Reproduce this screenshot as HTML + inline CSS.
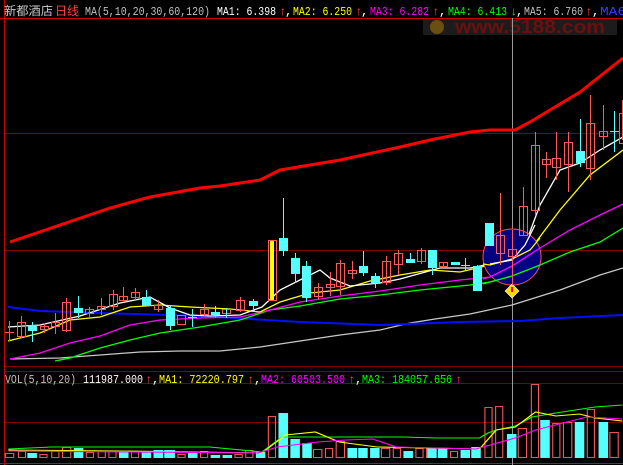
<!DOCTYPE html>
<html><head><meta charset="utf-8"><style>
html,body{margin:0;padding:0;background:#000;width:623px;height:465px;overflow:hidden}
svg{display:block}
text{font-family:"Liberation Mono","WenQuanYi Zen Hei",monospace;font-size:12px}
</style></head><body>
<svg width="623" height="465" viewBox="0 0 623 465" xmlns="http://www.w3.org/2000/svg">
<g stroke="#800000" stroke-width="1">
<line x1="4" y1="133.5" x2="623" y2="133.5"/>
<line x1="4" y1="250.5" x2="623" y2="250.5"/>
<line x1="4" y1="366.5" x2="623" y2="366.5"/>
<line x1="4" y1="371.5" x2="623" y2="371.5"/>
<line x1="4" y1="383.5" x2="623" y2="383.5"/>
<line x1="4" y1="422.5" x2="623" y2="422.5"/>
</g>
<g stroke="#d00000" stroke-width="1">
<line x1="4.5" y1="0" x2="4.5" y2="465"/>
<line x1="0" y1="18.5" x2="623" y2="18.5"/>
<line x1="0" y1="463.5" x2="623" y2="463.5"/>
</g>
<rect x="423" y="19" width="194" height="16" fill="#1c1c1c"/>
<circle cx="437" cy="27" r="7" fill="#6a5010"/>
<text x="455" y="33" fill="#6a1010" font-weight="bold" style="font-family:'Liberation Sans',sans-serif;font-size:18px" textLength="150" lengthAdjust="spacingAndGlyphs">www.5188.com</text>
<line x1="512.5" y1="18" x2="512.5" y2="465" stroke="#9a9a9a"/>
<text x="4" y="15" fill="#c8c8c8" textLength="49" lengthAdjust="spacingAndGlyphs">新都酒店</text>
<text x="55" y="15" fill="#ff4040" textLength="24" lengthAdjust="spacingAndGlyphs">日线</text>
<text x="85" y="15" fill="#c0c0c0" textLength="125" lengthAdjust="spacingAndGlyphs">MA(5,10,20,30,60,120)</text>
<text x="217" y="15" fill="#fff" textLength="59" lengthAdjust="spacingAndGlyphs">MA1: 6.398</text>
<text x="279" y="15" fill="#ff4040">↑</text><text x="285" y="15" fill="#fff">,</text>
<text x="293" y="15" fill="#ffff00" textLength="59" lengthAdjust="spacingAndGlyphs">MA2: 6.250</text>
<text x="355" y="15" fill="#ff4040">↑</text><text x="361" y="15" fill="#fff">,</text>
<text x="370" y="15" fill="#ff00ff" textLength="59" lengthAdjust="spacingAndGlyphs">MA3: 6.282</text>
<text x="432" y="15" fill="#ff4040">↑</text><text x="439" y="15" fill="#fff">,</text>
<text x="448" y="15" fill="#00ff00" textLength="59" lengthAdjust="spacingAndGlyphs">MA4: 6.413</text>
<text x="510" y="15" fill="#00ff00">↓</text><text x="516" y="15" fill="#fff">,</text>
<text x="524" y="15" fill="#c0c0c0" textLength="59" lengthAdjust="spacingAndGlyphs">MA5: 6.760</text>
<text x="585" y="15" fill="#ff4040">↑</text><text x="592" y="15" fill="#fff">,</text>
<text x="600" y="15" fill="#3040ff" textLength="26" lengthAdjust="spacingAndGlyphs">MA6</text>
<polyline fill="none" stroke="#ff0000" stroke-width="3" points="10,242 60,225 110,208 150,197 200,188 220,186 260,180 280,170 340,160 400,147 430,140 470,132 490,130 515,130 530,122 580,92 623,58"/>
<g fill="none" stroke-width="1.3">
<polyline stroke="#c8c8c8" points="10,359 60,358 100,355 140,352 180,351 220,351 260,347 300,341 340,335 380,330 410,323 435,319 470,314 512,305 560,290 600,275 623,268"/>
<polyline stroke="#0010ff" stroke-width="2" points="8,307 40,311 100,313 200,316 300,322 380,325 460,322 520,321 560,318 623,315"/>
<polyline stroke="#00ff00" points="55,361 70,358 100,348 130,340 160,333 200,327 240,320 270,310 300,306 340,299 380,295 420,290 470,285 490,282 512,276 540,265 570,252 600,242 623,228"/>
<polyline stroke="#ff00ff" points="10,359 40,353 70,343 100,336 130,325 160,320 200,318 240,317 270,310 300,302 340,296 380,291 420,285 460,280 490,277 512,266 540,248 570,230 600,215 623,204"/>
<polyline stroke="#ffff00" points="8,341 40,333 70,320 100,317 130,307 160,305 190,307 230,309 260,312 280,302 310,293 340,290 370,281 400,275 430,270 460,272 490,265 512,259 530,250 560,210 590,175 623,150"/>
<polyline stroke="#ffffff" points="8,327 40,325 80,316 120,303 150,297 170,308 190,315 210,316 240,315 262,307 280,290 300,280 320,270 330,278 350,286 380,283 400,279 440,268 470,268 490,264 512,260 525,245 540,205 560,170 580,163 600,150 623,137"/>
</g>
<ellipse cx="512" cy="257" rx="29" ry="28" fill="#000080" stroke="#ff5050" stroke-width="1"/>
<g fill="none" stroke-width="1.3">
<polyline stroke="#ffff00" points="483,264 490,265 512,259 530,250 540,238"/>
<polyline stroke="#ff00ff" points="483,279 490,277 512,266 540,248"/>
<polyline stroke="#00ff00" points="483,284 490,282 512,276 540,265"/>
<polyline stroke="#ffffff" points="490,264 512,260 525,245 535,225"/>
</g>
<polygon points="512,284 519,291 512,298 505,291" fill="#ffd700" stroke="#fff" stroke-width="0.6"/>
<rect x="511" y="287" width="2" height="5" fill="#d00"/>
<g stroke-width="1">
<g stroke="#ff5a5a" fill="none">
<line x1="9.5" y1="321" x2="9.5" y2="341"/><line x1="5" y1="332.5" x2="14" y2="332.5"/>
<line x1="21.5" y1="316" x2="21.5" y2="338"/><rect x="17.5" y="322.5" width="8" height="14"/>
<line x1="44.5" y1="323" x2="44.5" y2="333"/><rect x="40.5" y="326.5" width="8" height="3"/>
<line x1="55.5" y1="313" x2="55.5" y2="334"/><rect x="51.5" y="322.5" width="8" height="4"/>
<line x1="66.5" y1="298" x2="66.5" y2="332"/><rect x="62.5" y="302.5" width="8" height="28"/>
<rect x="85.5" y="309.5" width="8" height="4"/><line x1="89.5" y1="307" x2="89.5" y2="318"/>
<line x1="101.5" y1="298" x2="101.5" y2="315"/><rect x="97.5" y="306.5" width="8" height="3"/>
<line x1="113.5" y1="290" x2="113.5" y2="310"/><rect x="109.5" y="294.5" width="8" height="12"/>
<line x1="123.5" y1="287" x2="123.5" y2="300"/><rect x="119.5" y="296.5" width="8" height="4"/>
<line x1="135.5" y1="288" x2="135.5" y2="300"/><rect x="131.5" y="292.5" width="8" height="5"/>
<line x1="158.5" y1="300" x2="158.5" y2="312"/><rect x="154.5" y="305.5" width="8" height="4"/>
<rect x="177.5" y="315.5" width="8" height="9"/>
<rect x="200.5" y="309.5" width="8" height="5"/><line x1="204.5" y1="304" x2="204.5" y2="316"/>
<rect x="222.5" y="309.5" width="8" height="4"/>
<line x1="240.5" y1="297" x2="240.5" y2="312"/><rect x="236.5" y="300.5" width="8" height="10"/>
<rect x="268.5" y="240.5" width="8" height="60"/>
<line x1="318.5" y1="283" x2="318.5" y2="300"/><rect x="314.5" y="287.5" width="8" height="9"/>
<line x1="330.5" y1="272" x2="330.5" y2="296"/><rect x="326.5" y="284.5" width="8" height="3"/>
<line x1="340.5" y1="260" x2="340.5" y2="295"/><rect x="336.5" y="263.5" width="8" height="23"/>
<line x1="352.5" y1="261" x2="352.5" y2="279"/><rect x="348.5" y="270.5" width="8" height="3"/>
<line x1="386.5" y1="256" x2="386.5" y2="285"/><rect x="382.5" y="261.5" width="8" height="21"/>
<line x1="398.5" y1="250" x2="398.5" y2="275"/><rect x="394.5" y="253.5" width="8" height="11"/>
<line x1="421.5" y1="248" x2="421.5" y2="264"/><rect x="417.5" y="250.5" width="8" height="11"/>
<line x1="443.5" y1="262" x2="443.5" y2="268"/><rect x="439.5" y="262.5" width="8" height="4"/>
<line x1="500.5" y1="193" x2="500.5" y2="265"/><rect x="496.5" y="235.5" width="8" height="18"/>
<line x1="512.5" y1="230" x2="512.5" y2="285"/><rect x="508.5" y="249.5" width="8" height="7"/>
<line x1="523.5" y1="187" x2="523.5" y2="235"/><rect x="519.5" y="206.5" width="8" height="29"/>
<line x1="535.5" y1="132" x2="535.5" y2="215"/><rect x="531.5" y="145.5" width="8" height="65"/>
<line x1="546.5" y1="152" x2="546.5" y2="178"/><rect x="542.5" y="159.5" width="8" height="5"/>
<line x1="556.5" y1="132" x2="556.5" y2="180"/><rect x="552.5" y="158.5" width="8" height="9"/>
<line x1="568.5" y1="132" x2="568.5" y2="192"/><rect x="564.5" y="142.5" width="8" height="22"/>
<line x1="590.5" y1="95" x2="590.5" y2="180"/><rect x="586.5" y="123.5" width="8" height="45"/>
<line x1="603.5" y1="105" x2="603.5" y2="150"/><rect x="599.5" y="131.5" width="8" height="5"/>
<line x1="622.5" y1="100" x2="622.5" y2="140"/><rect x="619.5" y="113.5" width="8" height="30"/>
</g>
<rect x="270" y="241" width="4" height="59" fill="#ffff00"/>
<g fill="#55ffff" stroke="#55ffff">
<line x1="32.5" y1="322" x2="32.5" y2="342"/><rect x="28.5" y="325.5" width="8" height="5"/>
<line x1="78.5" y1="296" x2="78.5" y2="318"/><rect x="74.5" y="308.5" width="8" height="4"/>
<line x1="146.5" y1="290" x2="146.5" y2="305"/><rect x="142.5" y="297.5" width="8" height="8"/>
<line x1="170.5" y1="305" x2="170.5" y2="330"/><rect x="166.5" y="308.5" width="8" height="17"/>
<line x1="192.5" y1="309" x2="192.5" y2="327"/><line x1="188" y1="317.5" x2="197" y2="317.5"/>
<rect x="211.5" y="312.5" width="8" height="2"/><line x1="215.5" y1="306" x2="215.5" y2="318"/>
<line x1="226.5" y1="308" x2="226.5" y2="318"/>
<line x1="253.5" y1="299" x2="253.5" y2="310"/><rect x="249.5" y="301.5" width="8" height="4"/>
<line x1="283.5" y1="198" x2="283.5" y2="256"/><rect x="279.5" y="238.5" width="8" height="12"/>
<line x1="295.5" y1="253" x2="295.5" y2="283"/><rect x="291.5" y="258.5" width="8" height="15"/>
<line x1="306.5" y1="261" x2="306.5" y2="302"/><rect x="302.5" y="266.5" width="8" height="31"/>
<line x1="363.5" y1="251" x2="363.5" y2="276"/><rect x="359.5" y="266.5" width="8" height="6"/>
<line x1="375.5" y1="273" x2="375.5" y2="288"/><rect x="371.5" y="276.5" width="8" height="6"/>
<line x1="410.5" y1="253" x2="410.5" y2="262"/><rect x="406.5" y="259.5" width="8" height="3"/>
<line x1="432.5" y1="250" x2="432.5" y2="275"/><rect x="428.5" y="250.5" width="8" height="17"/>
<rect x="451.5" y="262.5" width="8" height="2"/>
<line x1="465.5" y1="258" x2="465.5" y2="270"/><line x1="461" y1="265.5" x2="470" y2="265.5"/>
<line x1="477.5" y1="265" x2="477.5" y2="291"/><rect x="473.5" y="266.5" width="8" height="24"/>
<rect x="485.5" y="223.5" width="8" height="22"/>
<line x1="580.5" y1="119" x2="580.5" y2="167"/><rect x="576.5" y="151.5" width="8" height="11"/>
<line x1="614.5" y1="111" x2="614.5" y2="152"/><line x1="610" y1="131.5" x2="619" y2="131.5"/>
</g>
</g>
<text x="5" y="383" fill="#c0c0c0" textLength="71" lengthAdjust="spacingAndGlyphs">VOL(5,10,20)</text>
<text x="83" y="383" fill="#fff" textLength="60" lengthAdjust="spacingAndGlyphs">111987.000</text>
<text x="145" y="383" fill="#ff4040">↑</text><text x="152" y="383" fill="#fff">,</text>
<text x="159" y="383" fill="#ffff00" textLength="85" lengthAdjust="spacingAndGlyphs">MA1: 72220.797</text>
<text x="247" y="383" fill="#ff4040">↑</text><text x="254" y="383" fill="#fff">,</text>
<text x="261" y="383" fill="#ff00ff" textLength="84" lengthAdjust="spacingAndGlyphs">MA2: 60503.500</text>
<text x="348" y="383" fill="#ff4040">↑</text><text x="355" y="383" fill="#fff">,</text>
<text x="362" y="383" fill="#00ff00" textLength="90" lengthAdjust="spacingAndGlyphs">MA3: 184057.656</text>
<text x="455" y="383" fill="#ff4040">↑</text>
<g transform="matrix(1.19 0 0 1 0 0)">
<g fill="none" stroke="#ff5a5a" stroke-width="0.9">
<rect x="4.5" y="453.5" width="7" height="4"/><rect x="15.5" y="451.5" width="6" height="6"/>
<rect x="33.5" y="454.5" width="6" height="3"/><rect x="43.5" y="451.5" width="6" height="6"/>
<rect x="52.5" y="447.5" width="7" height="10"/><rect x="72.5" y="452.5" width="6" height="5"/>
<rect x="82.5" y="451.5" width="6" height="6"/><rect x="91.5" y="451.5" width="6" height="6"/>
<rect x="110.5" y="451.5" width="6" height="6"/><rect x="149.5" y="454.5" width="6" height="3"/>
<rect x="168.5" y="451.5" width="6" height="6"/><rect x="197.5" y="454.5" width="6" height="3"/>
<rect x="206.5" y="450.5" width="6" height="7"/><rect x="225.5" y="416.5" width="6" height="41"/>
<rect x="263.5" y="449.5" width="7" height="8"/><rect x="273.5" y="448.5" width="6" height="9"/>
<rect x="282.5" y="441.5" width="7" height="16"/><rect x="320.5" y="448.5" width="7" height="9"/>
<rect x="330.5" y="448.5" width="6" height="9"/><rect x="349.5" y="448.5" width="6" height="9"/>
<rect x="358.5" y="448.5" width="7" height="9"/><rect x="378.5" y="451.5" width="6" height="6"/>
<rect x="407.5" y="407.5" width="6" height="50"/><rect x="416.5" y="406.5" width="6" height="51"/>
<rect x="435.5" y="428.5" width="7" height="29"/><rect x="446.5" y="384.5" width="6" height="73"/>
<rect x="464.5" y="423.5" width="6" height="34"/><rect x="473.5" y="422.5" width="7" height="35"/>
<rect x="493.5" y="409.5" width="6" height="48"/><rect x="512.5" y="432.5" width="7" height="25"/>
</g>
<g fill="#55ffff">
<rect x="23" y="453" width="8" height="5"/><rect x="62" y="448" width="8" height="10"/>
<rect x="100" y="451" width="8" height="7"/><rect x="119" y="452" width="8" height="6"/>
<rect x="129" y="450" width="8" height="8"/><rect x="138" y="450" width="9" height="8"/>
<rect x="158" y="452" width="8" height="6"/><rect x="177" y="455" width="8" height="3"/>
<rect x="187" y="455" width="8" height="3"/><rect x="215" y="452" width="8" height="6"/>
<rect x="234" y="413" width="8" height="45"/><rect x="244" y="439" width="8" height="19"/>
<rect x="254" y="443" width="8" height="15"/><rect x="292" y="448" width="8" height="10"/>
<rect x="301" y="448" width="8" height="10"/><rect x="311" y="448" width="8" height="10"/>
<rect x="339" y="451" width="8" height="7"/><rect x="359" y="448" width="8" height="10"/>
<rect x="368" y="448" width="8" height="10"/><rect x="387" y="450" width="8" height="8"/>
<rect x="396" y="447" width="8" height="11"/><rect x="426" y="434" width="8" height="24"/>
<rect x="454" y="420" width="8" height="38"/><rect x="483" y="422" width="8" height="36"/>
<rect x="503" y="422" width="8" height="36"/>
</g>
<g fill="none" stroke-width="1.1">
<polyline stroke="#00ff00" points="7,449 43,447 176,447 220,452 237,437 340,437 367,438 403,438 410,433 417,430 433,426 447,417 467,413 500,407 523,405"/>
<polyline stroke="#ffff00" points="7,450 100,451 220,453 240,435 265,432 285,442 317,447 403,449 417,430 433,427 450,412 467,416 487,414 500,418 523,421"/>
<polyline stroke="#ff00ff" points="7,451 217,453 233,447 267,442 290,440 313,439 333,447 400,449 433,438 450,430 493,417 523,419"/>
</g>
</g>
</svg>
</body></html>
